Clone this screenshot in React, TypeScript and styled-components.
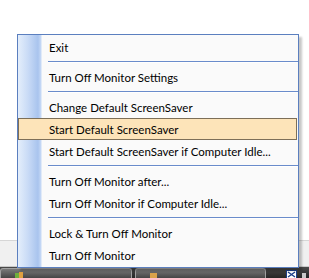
import React from "react";
import styled, { createGlobalStyle } from "styled-components";

const Global = createGlobalStyle`
  html, body { margin: 0; padding: 0; background: #ffffff; }
  body { width: 309px; height: 278px; overflow: hidden; font-family: Lato, "Liberation Sans", sans-serif; }
`;

const Screen = styled.div`
  display: flex;
  flex-direction: column;
  width: 309px;
  height: 278px;
  position: relative;
  overflow: hidden;
`;

const WindowArea = styled.div`
  height: 243px;
  background: #ffffff;
  border-bottom: 1px solid #d6d6d6;
`;

const StatusBar = styled.div`
  height: 25px;
  background: #f0f0f0;
  border-bottom: 1px solid #c9c9c9;
`;

const Taskbar = styled.div`
  flex: 1;
  display: flex;
  align-items: flex-start;
  gap: 3px;
  padding: 1px 0 0 0;
  background: linear-gradient(#4a4a4a, #262626);
`;

const TaskButton = styled.div<{ $w: number }>`
  width: ${(p) => p.$w}px;
  height: 10px;
  box-sizing: border-box;
  border: 1px solid #a0a0a0;
  border-bottom: none;
  border-radius: 3px 3px 0 0;
  background: linear-gradient(#7a7a7a, #454545);
  display: flex;
  padding: 2px 0 0 13px;
`;

const TrayArea = styled.div`
  margin-left: auto;
  display: flex;
  gap: 4px;
  padding: 2px 2px 0 0;
`;

const Menu = styled.div`
  position: absolute;
  left: 17px;
  top: 34px;
  width: 282px;
  box-sizing: border-box;
  border: 1px solid #5b7fbf;
  padding: 1px 0 1px 0;
  background: linear-gradient(
      to right,
      #e4eefb 0px,
      #c9dbf6 10px,
      #a9c4ee 20px,
      #c7daf6 23px,
      #fafafa 24px
    );
  box-shadow: 3px 3px 2px rgba(0, 0, 0, 0.22);
  display: flex;
  flex-direction: column;
`;

const Item = styled.div<{ $active?: boolean }>`
  height: 22px;
  box-sizing: border-box;
  margin-right: 1px;
  padding-left: 30px;
  display: flex;
  align-items: center;
  font-size: 11.5px;
  color: #000000;
  white-space: nowrap;
  border: 1px solid ${(p) => (p.$active ? "#7d6f58" : "transparent")};
  background: ${(p) => (p.$active ? "#fde4b9" : "transparent")};
`;

const Separator = styled.div`
  height: 8px;
  margin-left: 30px;
  display: flex;
  flex-direction: column;
  justify-content: center;
  &::before {
    content: "";
    display: block;
    height: 1px;
    background: #6a8ccb;
  }
  &::after {
    content: "";
    display: block;
    height: 1px;
    background: #ffffff;
  }
`;

type Entry = { label?: string; sep?: boolean; active?: boolean };

const entries: Entry[] = [
  { label: "Exit" },
  { sep: true },
  { label: "Turn Off Monitor Settings" },
  { sep: true },
  { label: "Change Default ScreenSaver" },
  { label: "Start Default ScreenSaver", active: true },
  { label: "Start Default ScreenSaver if Computer Idle..." },
  { sep: true },
  { label: "Turn Off Monitor after..." },
  { label: "Turn Off Monitor if Computer Idle..." },
  { sep: true },
  { label: "Lock & Turn Off Monitor" },
  { label: "Turn Off Monitor" },
];

export default function App() {
  return (
    <Screen>
      <Global />
      <WindowArea />
      <StatusBar />
      <Taskbar>
        <TaskButton $w={132}>
          <svg width="10" height="8" viewBox="0 0 10 8">
            <rect x="1" y="2" width="4" height="6" fill="#6fae3c" />
            <rect x="5" y="1" width="4" height="7" fill="#e0a040" />
          </svg>
        </TaskButton>
        <TaskButton $w={131}>
          <svg width="10" height="8" viewBox="0 0 10 8">
            <rect x="1" y="2" width="7" height="6" fill="#d9a24a" />
          </svg>
        </TaskButton>
        <TrayArea>
          <svg width="11" height="8" viewBox="0 0 11 8">
            <rect x="0.5" y="0.5" width="10" height="8" fill="#ffffff" stroke="#1c3f8a" />
            <path d="M2 2 L9 7 M9 2 L2 7" stroke="#1c3f8a" strokeWidth="1.4" />
          </svg>
          <svg width="6" height="8" viewBox="0 0 6 8">
            <rect x="1" y="3" width="4" height="5" fill="#c9c9c9" />
          </svg>
        </TrayArea>
      </Taskbar>
      <Menu>
        {entries.map((e, i) =>
          e.sep ? (
            <Separator key={i} />
          ) : (
            <Item key={i} $active={e.active}>
              {e.label}
            </Item>
          )
        )}
      </Menu>
    </Screen>
  );
}
